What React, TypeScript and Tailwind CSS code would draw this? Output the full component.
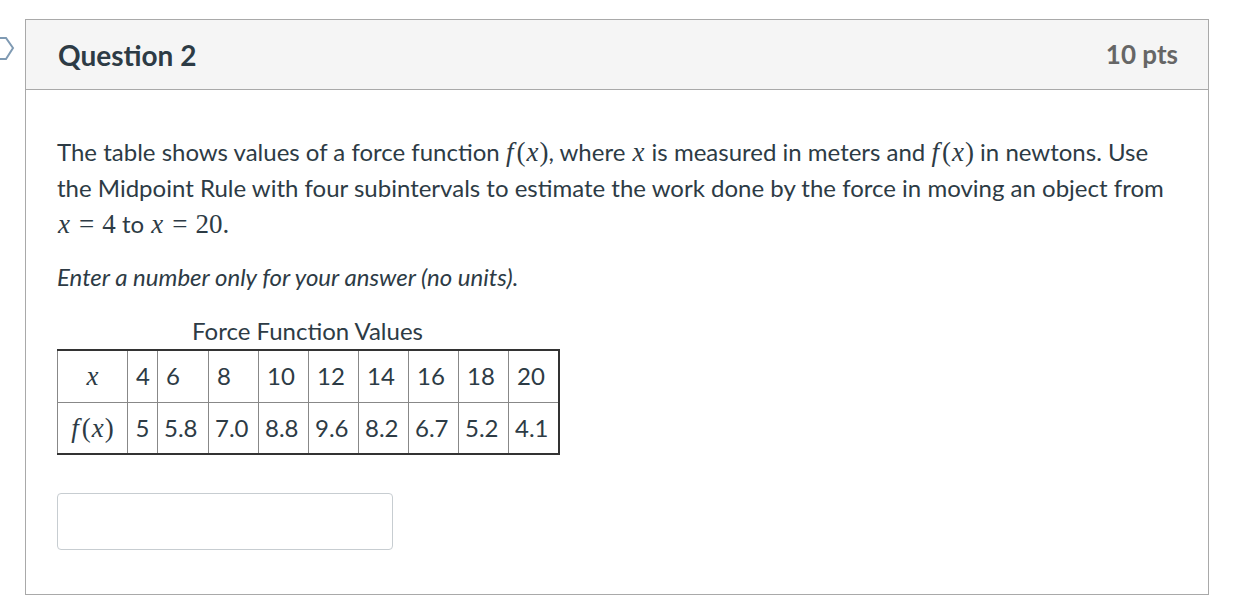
import React from "react";

const serif = { fontFamily: '"Liberation Serif", "DejaVu Serif", serif' };
const M = ({ children, className = "" }: { children: React.ReactNode; className?: string }) => (
  <span className={`italic text-[27px] leading-none ${className}`} style={serif}>{children}</span>
);
const R = ({ children, className = "" }: { children: React.ReactNode; className?: string }) => (
  <span className={`not-italic text-[27px] leading-none ${className}`} style={serif}>{children}</span>
);
const Fx = () => (
  <span className="whitespace-nowrap">
    <M className="pr-[3px]">f</M>
    <R>(</R>
    <M className="px-[1px]">x</M>
    <R>)</R>
  </span>
);

export default function App() {
  const xs = ["4", "6", "8", "10", "12", "14", "16", "18", "20"];
  const fs = ["5", "5.8", "7.0", "8.8", "9.6", "8.2", "6.7", "5.2", "4.1"];
  const widths = [70, 30, 51, 50, 50, 50, 50, 50, 50, 50];
  return (
    <div
      className="relative w-[1260px] h-[606px] bg-white pt-[19px] pl-[25px] text-[#2d3b45]"
      style={{ fontFamily: 'Lato, "Noto Sans", sans-serif' }}
    >
      <svg className="absolute left-0 top-[36px]" width="16" height="26" viewBox="0 0 16 26">
        <polyline points="-4,2 6,2 13,12 6,23 -4,23" fill="none" stroke="#7f9ab3" strokeWidth="2" />
      </svg>
      <div className="w-[1184px] h-[576px] border border-[#a9a9a9] flex flex-col">
        <div className="h-[70px] shrink-0 bg-[#f5f5f5] border-b border-[#a9a9a9] flex items-center justify-between pl-[32px] pr-[30px]">
          <span className="text-[28px] font-bold text-[#2d3b45]">Question 2</span>
          <span className="text-[26px] font-bold text-[#666666]">10 pts</span>
        </div>
        <div className="pt-[44px] pl-[31px] pr-[31px]">
          <p className="text-[24px] leading-[36px]">
            The table shows values of a force function <Fx />, where <M className="px-[1px]">x</M> is measured in meters and <Fx /> in
            newtons. Use the Midpoint Rule with four subintervals to estimate the work done by the force in moving an
            object from{" "}
            <span className="whitespace-nowrap">
              <M className="px-[1px]">x</M>
              <R className="mx-[8px]">=</R>
              <R>4</R>
            </span>{" "}
            to{" "}
            <span className="whitespace-nowrap">
              <M className="px-[1px]">x</M>
              <R className="mx-[8px]">=</R>
              <R>20.</R>
            </span>
          </p>
          <p className="mt-[17px] text-[24px] leading-[36px] italic">Enter a number only for your answer (no units).</p>
          <div className="mt-[18px] w-[501px]">
            <div className="text-[24px] leading-[36px] text-center">Force Function Values</div>
            <table className="table-fixed border-collapse w-[501px] text-[24px] border-t-2 border-r-2 border-b-2 border-l border-t-[#333] border-r-[#333] border-b-[#333] border-l-[#888]">
              <colgroup>
                {widths.map((w, i) => (
                  <col key={i} style={{ width: w }} />
                ))}
              </colgroup>
              <tbody>
                <tr className="h-[52px]">
                  <td className="border border-[#888] text-center">
                    <M>x</M>
                  </td>
                  {xs.map((v, i) => (
                    <td key={i} className="border border-[#888] pl-[8px] pr-0 text-left whitespace-nowrap">
                      {v}
                    </td>
                  ))}
                </tr>
                <tr className="h-[52px]">
                  <td className="border border-[#888] text-center">
                    <Fx />
                  </td>
                  {fs.map((v, i) => (
                    <td key={i} className={`border border-[#888] whitespace-nowrap ${i === 0 ? "text-center" : "pl-[6px] text-left"}`}>
                      {v}
                    </td>
                  ))}
                </tr>
              </tbody>
            </table>
          </div>
          <input
            type="text"
            className="mt-[38px] block w-[336px] h-[57px] border border-[#c7cdd1] rounded-[4px] bg-white outline-none"
          />
        </div>
      </div>
    </div>
  );
}
